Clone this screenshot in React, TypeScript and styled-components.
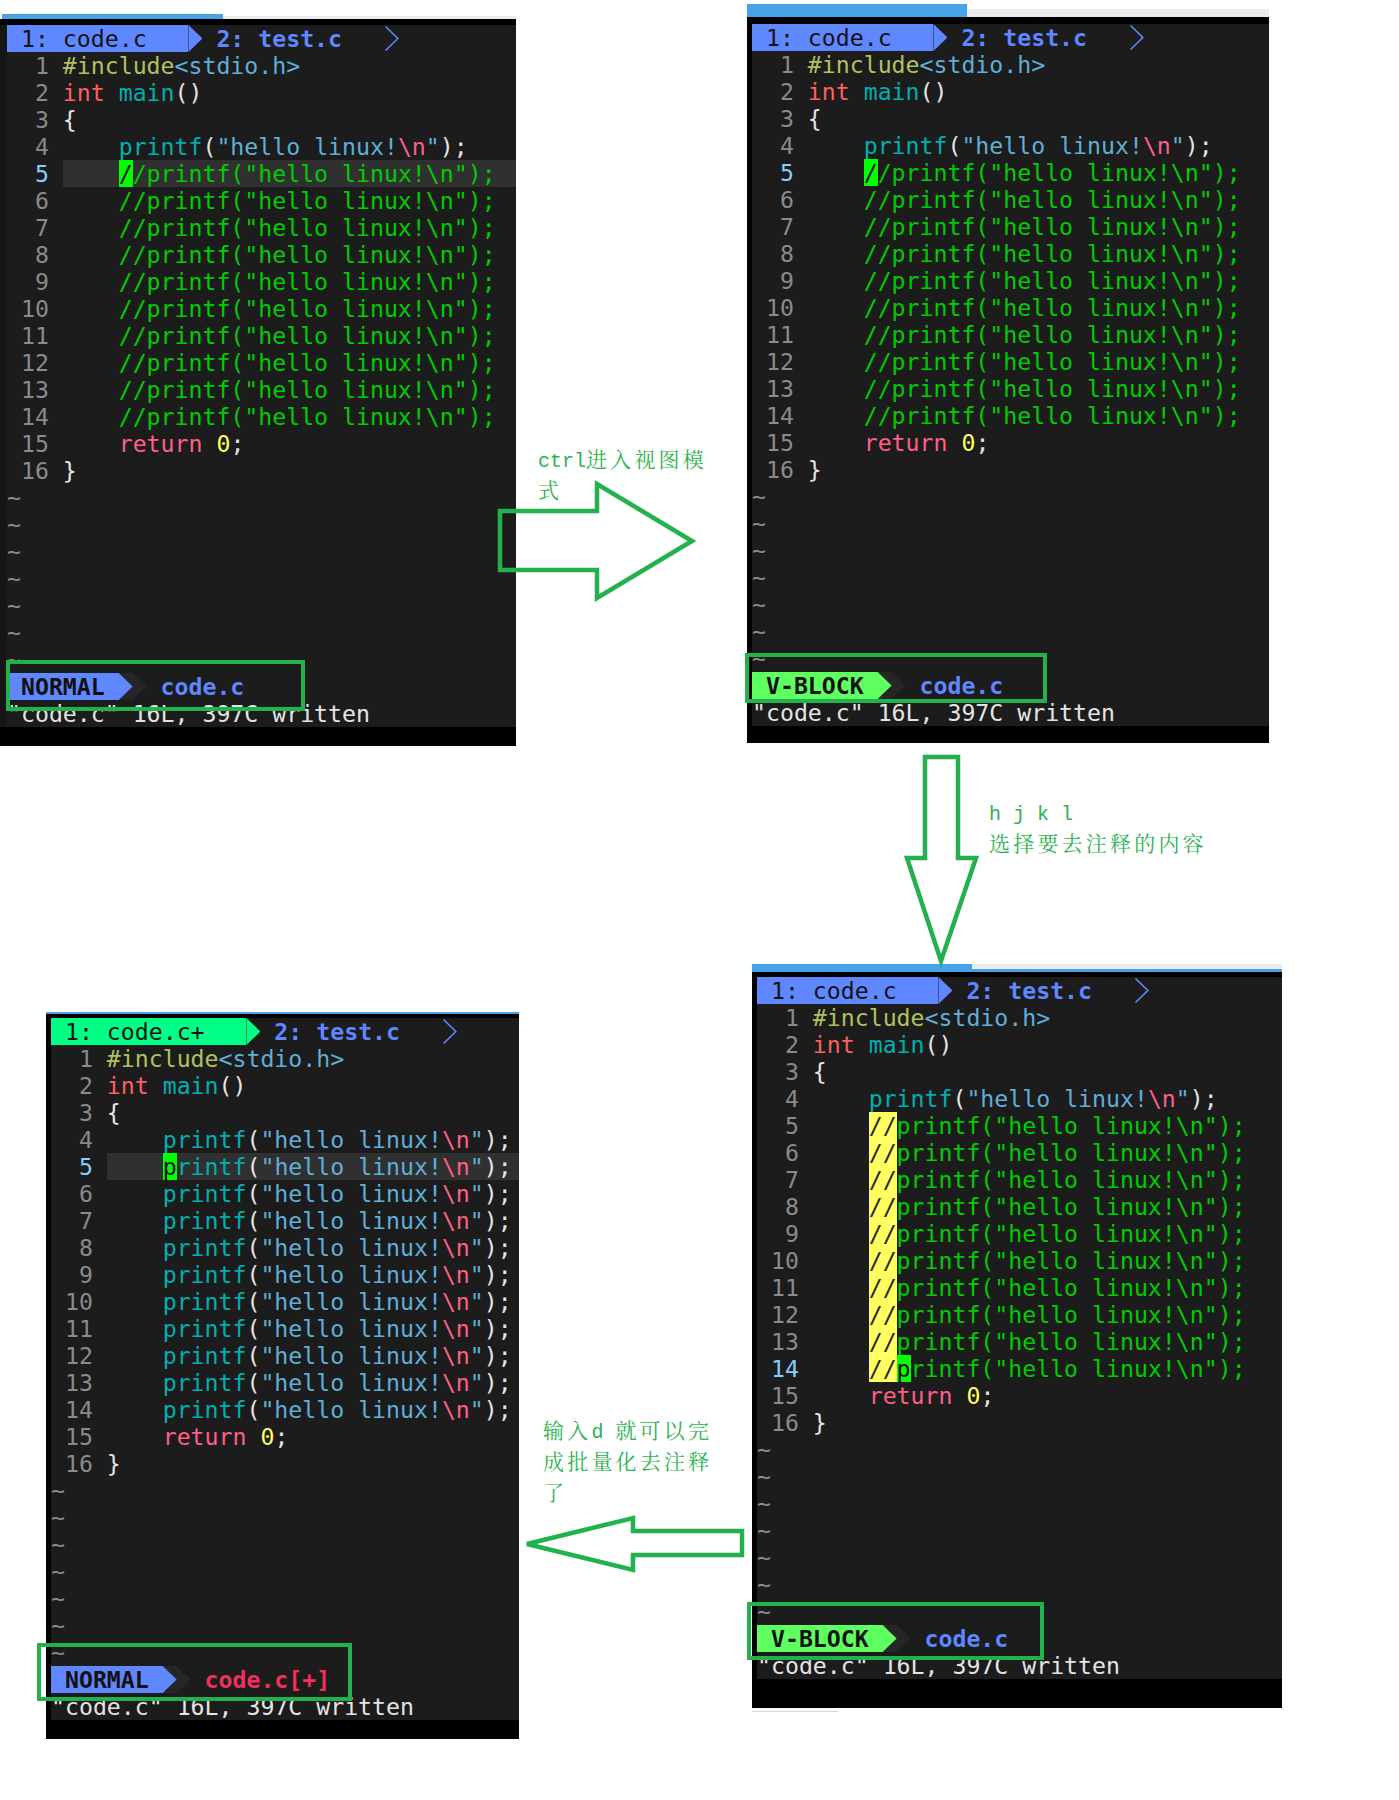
import React from "react";
import styled, { createGlobalStyle, css } from "styled-components";

const C = {
  bg: "#1c1c1c",
  frame: "#000000",
  nr: "#8a8a8a",
  curNr: "#87cefa",
  cursorLine: "#303030",
  pre: "#afc35c",
  inc: "#5fafd7",
  type: "#ff5f5f",
  func: "#00afaf",
  punct: "#e4e4e4",
  str: "#5fafd7",
  esc: "#ff5f87",
  comment: "#00cd00",
  ret: "#ff5f87",
  num: "#ffff5f",
  tilde: "#8a8a8a",
  blue: "#5f87ff",
  vblock: "#5fff5f",
  modified: "#00ff87",
  sel: "#ffff5f",
  cursor: "#00ff00",
  msg: "#e4e4e4",
  dark: "#262626",
  note: "#22b14c",
  chromeBlue: "#47a2e8",
  chromeGray: "#ececec",
  red: "#f0305a",
};

type Seg = { t: string; c?: string; bg?: string };
type Line = Seg[];

const GlobalStyle = createGlobalStyle`
  html, body { margin: 0; padding: 0; background: #ffffff; }
  #root { width: 1399px; }
`;

const Canvas = styled.div`
  position: relative;
  width: 1399px;
  height: 1800px;
  background: #ffffff;
  overflow: hidden;
`;

const Collage = styled.div`
  display: grid;
  grid-template-columns: 747px 652px;
  grid-template-rows: 746px auto;
  align-items: start;
`;

const PanelBox = styled.div<{ $w: number; $mt: number; $ml: number }>`
  position: relative;
  width: ${(p) => p.$w}px;
  margin-top: ${(p) => p.$mt}px;
  margin-left: ${(p) => p.$ml}px;
  display: flex;
  flex-direction: column;
`;

/* ---------- window chrome from the screenshot tool ---------- */
const Strip = styled.div<{ $h: number; $align: string }>`
  display: flex;
  height: ${(p) => p.$h}px;
  align-items: ${(p) => p.$align};
`;
const StripBlue = styled.div<{ $w: number; $ml: number }>`
  flex: none;
  width: ${(p) => p.$w}px;
  margin-left: ${(p) => p.$ml}px;
  align-self: stretch;
  background: ${C.chromeBlue};
`;
const StripGray = styled.div<{ $h: number }>`
  flex: 1;
  height: ${(p) => p.$h}px;
  background: ${C.chromeGray};
`;
const AccentLine = styled.div<{ $h: number }>`
  height: ${(p) => p.$h}px;
  background: ${C.chromeBlue};
`;
const BlackGap = styled.div<{ $h: number }>`
  height: ${(p) => p.$h}px;
  background: ${C.frame};
`;

/* ---------- terminal ---------- */
const Screen = styled.div<{ $pl: number; $frame: string }>`
  display: flex;
  background: ${(p) => p.$frame};
  padding-left: ${(p) => p.$pl}px;
`;
const Term = styled.div`
  flex: 1;
  min-width: 0;
  background: ${C.bg};
  font-family: "DejaVu Sans Mono", "Liberation Mono", monospace;
  font-size: 23.2px;
  color: ${C.punct};
`;
const TermRow = styled.div`
  display: flex;
  height: 27px;
  line-height: 27px;
  white-space: pre;
  overflow: hidden;
`;
const Gutter = styled.span<{ $cur: boolean }>`
  flex: none;
  width: 4ch;
  color: ${(p) => (p.$cur ? C.curNr : C.nr)};
`;
const Code = styled.span<{ $hl: boolean }>`
  flex: 1;
  min-width: 0;
  background: ${(p) => (p.$hl ? C.cursorLine : "transparent")};
`;
const Tok = styled.span<{ $c?: string; $bg?: string }>`
  color: ${(p) => p.$c ?? C.punct};
  ${(p) =>
    p.$bg &&
    css`
      display: inline-block;
      height: 27px;
      background: ${p.$bg};
    `}
`;
const Tilde = styled.span`
  color: ${C.tilde};
`;
const ActiveTab = styled.span<{ $bg: string }>`
  flex: none;
  background: ${(p) => p.$bg};
  color: #141414;
`;
const InactiveTab = styled.span`
  flex: none;
  color: ${C.blue};
  font-weight: bold;
`;
const SepCell = styled.span<{ $bg: string }>`
  flex: none;
  display: flex;
  width: 1ch;
  height: 27px;
  background: ${(p) => p.$bg};
`;
const SepTri = styled.span<{ $fg: string }>`
  display: block;
  width: 100%;
  height: 100%;
  background: ${(p) => p.$fg};
  clip-path: polygon(0 0, 100% 50%, 0 100%);
`;
const ChevronCell = styled.span`
  flex: none;
  display: flex;
  width: 1.1ch;
  height: 27px;
`;
const Mode = styled.span<{ $bg: string }>`
  flex: none;
  background: ${(p) => p.$bg};
  color: #111111;
  font-weight: bold;
`;
const FileName = styled.span<{ $c: string }>`
  flex: none;
  color: ${(p) => p.$c};
  font-weight: bold;
`;
const Message = styled.span`
  color: ${C.msg};
`;
const Band = styled.div<{ $h: number }>`
  height: ${(p) => p.$h}px;
  background: #000000;
`;
const FooterLine = styled.div`
  width: 86px;
  height: 1px;
  margin-top: 3px;
  background: #d6d6d6;
`;
const NoteBox = styled.div<{ $x: number; $y: number; $w: number; $h: number }>`
  position: absolute;
  left: ${(p) => p.$x}px;
  top: ${(p) => p.$y}px;
  width: ${(p) => p.$w}px;
  height: ${(p) => p.$h}px;
  border: 4px solid ${C.note};
  box-sizing: border-box;
  pointer-events: none;
`;

/* ---------- annotations ---------- */
const ArrowLayer = styled.svg`
  position: absolute;
  left: 0;
  top: 0;
  width: 1399px;
  height: 1800px;
  pointer-events: none;
`;
const Note = styled.div<{ $x: number; $y: number }>`
  position: absolute;
  left: ${(p) => p.$x}px;
  top: ${(p) => p.$y}px;
  color: #2cb350;
  font-family: "Noto Serif CJK SC", "Noto Sans CJK SC", serif;
  font-size: 21px;
  letter-spacing: 3.2px;
  line-height: 31px;
  white-space: pre;
`;
const NoteLine = styled.div`
  height: 31px;
  line-height: 31px;
`;
const Latin = styled.span`
  font-family: "Liberation Mono", monospace;
  font-size: 20px;
  letter-spacing: 0;
  line-height: 1;
`;

/* ---------- code content ---------- */
const sp4: Seg = { t: "    " };
const include: Line = [
  { t: "#include", c: C.pre },
  { t: "<stdio.h>", c: C.inc },
];
const mainL: Line = [
  { t: "int", c: C.type },
  { t: " " },
  { t: "main", c: C.func },
  { t: "()" },
];
const openL: Line = [{ t: "{" }];
const closeL: Line = [{ t: "}" }];
const returnL: Line = [sp4, { t: "return", c: C.ret }, { t: " " }, { t: "0", c: C.num }, { t: ";" }];
const printfRest: Seg[] = [
  { t: "(" },
  { t: '"hello linux!', c: C.str },
  { t: "\\n", c: C.esc },
  { t: '"', c: C.str },
  { t: ");" },
];
const printfL: Line = [sp4, { t: "printf", c: C.func }, ...printfRest];
const printfCursorL: Line = [sp4, { t: "p", c: "#0a0a0a", bg: C.cursor }, { t: "rintf", c: C.func }, ...printfRest];
const commentText = 'printf("hello linux!\\n");';
const commentL: Line = [sp4, { t: "//" + commentText, c: C.comment }];
const commentCursorL: Line = [sp4, { t: "/", c: "#0a0a0a", bg: C.cursor }, { t: "/" + commentText, c: C.comment }];
const selL: Line = [sp4, { t: "//", c: "#262626", bg: C.sel }, { t: commentText, c: C.comment }];
const selCursorL: Line = [
  sp4,
  { t: "//", c: "#262626", bg: C.sel },
  { t: "p", c: "#0a0a0a", bg: C.cursor },
  { t: commentText.slice(1), c: C.comment },
];

const repeat = (l: Line, n: number): Line[] => Array.from({ length: n }, () => l);
const head: Line[] = [include, mainL, openL, printfL];
const tail: Line[] = [returnL, closeL];

const linesCommented: Line[] = [...head, commentCursorL, ...repeat(commentL, 9), ...tail];
const linesSelected: Line[] = [...head, ...repeat(selL, 9), selCursorL, ...tail];
const linesPlain: Line[] = [...head, printfCursorL, ...repeat(printfL, 9), ...tail];

type ChromeSpec = {
  stripH: number;
  blueW: number;
  blueML: number;
  grayH: number;
  align: string;
  lineH: number;
  blackH: number;
};

type PanelSpec = {
  w: number;
  mt: number;
  ml: number;
  pl: number;
  frame: string;
  chrome: ChromeSpec;
  lines: Line[];
  curLine: number;
  cursorLine: boolean;
  tabLabel: string;
  tabBg: string;
  mode: string;
  modeBg: string;
  file: string;
  fileColor: string;
  band: number;
  footer?: boolean;
  box: { x: number; y: number; w: number; h: number };
};

function Chrome({ c }: { c: ChromeSpec }) {
  return (
    <>
      {c.stripH > 0 && (
        <Strip $h={c.stripH} $align={c.align}>
          <StripBlue $w={c.blueW} $ml={c.blueML} />
          <StripGray $h={c.grayH} />
        </Strip>
      )}
      {c.lineH > 0 && <AccentLine $h={c.lineH} />}
      <BlackGap $h={c.blackH} />
    </>
  );
}

function Sep({ fg, bg }: { fg: string; bg: string }) {
  return (
    <SepCell $bg={bg}>
      <SepTri $fg={fg} />
    </SepCell>
  );
}

function Chevron() {
  return (
    <ChevronCell>
      <svg width="100%" height="27" viewBox="0 0 15 27" preserveAspectRatio="none">
        <polyline points="1.5,1.5 13.5,13.5 1.5,25.5" fill="none" stroke={C.blue} strokeWidth="1.6" />
      </svg>
    </ChevronCell>
  );
}

function VimPanel({ p }: { p: PanelSpec }) {
  return (
    <PanelBox $w={p.w} $mt={p.mt} $ml={p.ml}>
      <Chrome c={p.chrome} />
      <Screen $pl={p.pl} $frame={p.frame}>
        <Term>
          <TermRow>
            <ActiveTab $bg={p.tabBg}>{` ${p.tabLabel}   `}</ActiveTab>
            <Sep fg={p.tabBg} bg={C.bg} />
            <InactiveTab>{" 2: test.c   "}</InactiveTab>
            <Chevron />
          </TermRow>
          {p.lines.map((line, i) => (
            <TermRow key={i}>
              <Gutter $cur={i + 1 === p.curLine}>{`${String(i + 1).padStart(3, " ")} `}</Gutter>
              <Code $hl={p.cursorLine && i + 1 === p.curLine}>
                {line.map((s, j) => (
                  <Tok key={j} $c={s.c} $bg={s.bg}>
                    {s.t}
                  </Tok>
                ))}
              </Code>
            </TermRow>
          ))}
          {Array.from({ length: 7 }, (_, i) => (
            <TermRow key={`t${i}`}>
              <Tilde>~</Tilde>
            </TermRow>
          ))}
          <TermRow>
            <Mode $bg={p.modeBg}>{` ${p.mode} `}</Mode>
            <Sep fg={p.modeBg} bg={C.dark} />
            <Sep fg={C.dark} bg={C.bg} />
            <FileName $c={p.fileColor}>{` ${p.file}`}</FileName>
          </TermRow>
          <TermRow>
            <Message>{'"code.c" 16L, 397C written'}</Message>
          </TermRow>
        </Term>
      </Screen>
      <Band $h={p.band} />
      {p.footer && <FooterLine />}
      <NoteBox $x={p.box.x} $y={p.box.y} $w={p.box.w} $h={p.box.h} />
    </PanelBox>
  );
}

const panel1: PanelSpec = {
  w: 516,
  mt: 14,
  ml: 0,
  pl: 7,
  frame: "#151515",
  chrome: { stripH: 5, blueW: 221, blueML: 2, grayH: 3, align: "flex-end", lineH: 0, blackH: 6 },
  lines: linesCommented,
  curLine: 5,
  cursorLine: true,
  tabLabel: "1: code.c",
  tabBg: C.blue,
  mode: "NORMAL",
  modeBg: C.blue,
  file: "code.c",
  fileColor: C.blue,
  band: 19,
  box: { x: 6, y: 646, w: 299, h: 51 },
};

const panel2: PanelSpec = {
  w: 522,
  mt: 4,
  ml: 0,
  pl: 5,
  frame: "#000000",
  chrome: { stripH: 13, blueW: 220, blueML: 0, grayH: 8, align: "flex-end", lineH: 0, blackH: 7 },
  lines: linesCommented,
  curLine: 5,
  cursorLine: false,
  tabLabel: "1: code.c",
  tabBg: C.blue,
  mode: "V-BLOCK",
  modeBg: C.vblock,
  file: "code.c",
  fileColor: C.blue,
  band: 17,
  box: { x: -2, y: 649, w: 302, h: 50 },
};

const panel4: PanelSpec = {
  w: 473,
  mt: 266,
  ml: 46,
  pl: 5,
  frame: "#000000",
  chrome: { stripH: 0, blueW: 0, blueML: 0, grayH: 0, align: "flex-start", lineH: 2, blackH: 4 },
  lines: linesPlain,
  curLine: 5,
  cursorLine: true,
  tabLabel: "1: code.c+",
  tabBg: C.modified,
  mode: "NORMAL",
  modeBg: C.blue,
  file: "code.c[+]",
  fileColor: C.red,
  band: 19,
  box: { x: -9, y: 631, w: 315, h: 58 },
};

const panel3: PanelSpec = {
  w: 530,
  mt: 218,
  ml: 5,
  pl: 5,
  frame: "#000000",
  chrome: { stripH: 5, blueW: 220, blueML: 0, grayH: 5, align: "flex-start", lineH: 3, blackH: 5 },
  lines: linesSelected,
  curLine: 14,
  cursorLine: false,
  tabLabel: "1: code.c",
  tabBg: C.blue,
  mode: "V-BLOCK",
  modeBg: C.vblock,
  file: "code.c",
  fileColor: C.blue,
  band: 29,
  footer: true,
  box: { x: -5, y: 638, w: 297, h: 58 },
};

export default function App() {
  return (
    <>
      <GlobalStyle />
      <Canvas>
        <Collage>
          <VimPanel p={panel1} />
          <VimPanel p={panel2} />
          <VimPanel p={panel4} />
          <VimPanel p={panel3} />
        </Collage>

        <ArrowLayer viewBox="0 0 1399 1800">
          <polygon
            points="500,511 597,511 597,484 692,541 597,598 597,570 500,570"
            fill="none"
            stroke={C.note}
            strokeWidth="4.5"
          />
          <polygon
            points="925,757 958,757 958,858 976,858 941,961 907,858 925,858"
            fill="none"
            stroke={C.note}
            strokeWidth="4.5"
          />
          <polygon
            points="742,1531 633,1531 633,1518 527,1544 633,1570 633,1555 742,1555"
            fill="none"
            stroke={C.note}
            strokeWidth="4.5"
          />
        </ArrowLayer>

        <Note $x={538} $y={443}>
          <NoteLine>
            <Latin>ctrl</Latin>进入视图模
          </NoteLine>
          <NoteLine>式</NoteLine>
        </Note>
        <Note $x={989} $y={796}>
          <NoteLine>
            <Latin>h j k l</Latin>
          </NoteLine>
          <NoteLine>选择要去注释的内容</NoteLine>
        </Note>
        <Note $x={543} $y={1414}>
          <NoteLine>
            输入<Latin>d </Latin>就可以完
          </NoteLine>
          <NoteLine>成批量化去注释</NoteLine>
          <NoteLine>了</NoteLine>
        </Note>
      </Canvas>
    </>
  );
}
